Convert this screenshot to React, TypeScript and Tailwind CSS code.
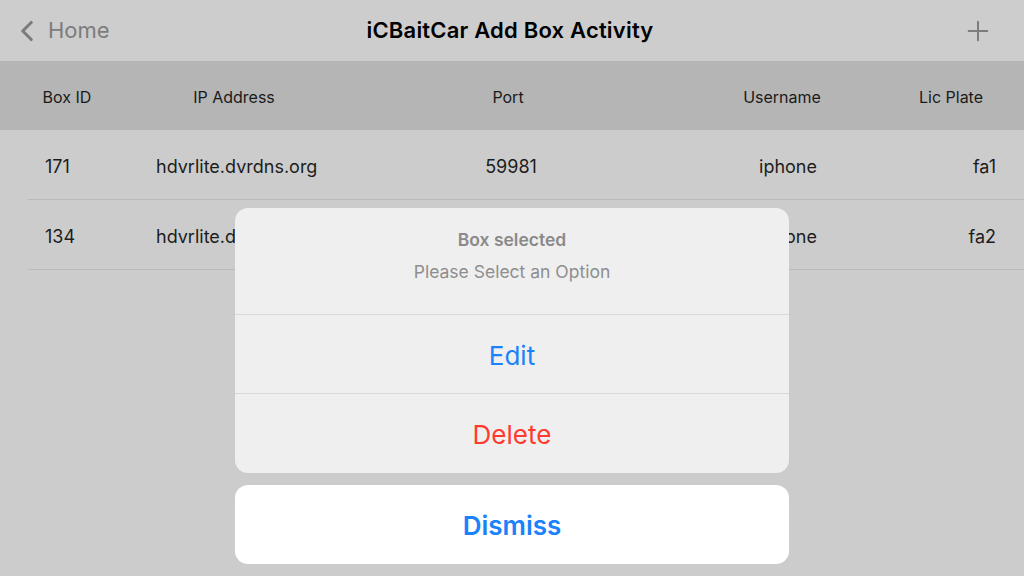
import { ChevronLeft, Plus } from "lucide-react"

const font = { fontFamily: 'Inter, "Noto Sans", "Liberation Sans", sans-serif' }

const rows = [
  { id: "171", ip: "hdvrlite.dvrdns.org", port: "59981", user: "iphone", plate: "fa1" },
  { id: "134", ip: "hdvrlite.dvrdns.org", port: "59981", user: "iphone", plate: "fa2" },
]

export default function App() {
  return (
    <main
      className="relative w-[1024px] h-[576px] overflow-hidden bg-[#cccccc] text-[#1c1c1c]"
      style={font}
    >
      {/* nav bar */}
      <header className="flex h-[61px] items-center bg-[#cdcdcd] pl-[10px] pr-[14px]">
        <div className="flex w-[300px] items-center text-[#7c7c7c]">
          <ChevronLeft className="h-[34px] w-[34px]" strokeWidth={2.2} />
          <span className="ml-[4px] text-[22px]">Home</span>
        </div>
        <h1 className="flex-1 text-center text-[22px] font-semibold tracking-[0.2px] text-black">
          iCBaitCar Add Box Activity
        </h1>
        <div className="flex w-[300px] justify-end pr-[16px] text-[#7c7c7c]">
          <Plus className="h-[32px] w-[32px]" strokeWidth={1.5} />
        </div>
      </header>

      {/* column header */}
      <div className="flex h-[69px] items-center bg-[#b5b5b5] pt-[3px] text-[16px] text-[#1a1a1a]">
        <div className="w-[134px] text-center">Box ID</div>
        <div className="w-[200px] text-center">IP Address</div>
        <div className="w-[348px] text-center">Port</div>
        <div className="w-[200px] text-center">Username</div>
        <div className="w-[138px] text-center">Lic Plate</div>
      </div>

      {/* rows */}
      <div className="pl-[28px]">
        {rows.map((r) => (
          <div key={r.id} className="flex h-[70px] items-center border-b border-[#b9b9b9] pt-[4px] text-[18px]">
            <div className="w-[128px] pl-[17px]">{r.id}</div>
            <div className="w-[300px]">{r.ip}</div>
            <div className="w-[110px] text-center">{r.port}</div>
            <div className="w-[134px]" />
            <div className="w-[176px] text-center">{r.user}</div>
            <div className="flex-1 pr-[28px] text-right">{r.plate}</div>
          </div>
        ))}
      </div>

      {/* action sheet */}
      <div className="absolute left-[235px] top-[208px] flex w-[554px] flex-col gap-[12px]">
        <div className="overflow-hidden rounded-[13px] bg-[#efefef]">
          <div className="flex h-[107px] flex-col items-center border-b border-[#d9d9d9] pt-[19px]">
            <div className="text-[17.5px] font-semibold text-[#8a8a8a]">Box selected</div>
            <div className="mt-[6px] text-[17.5px] text-[#8e8e8e]">Please Select an Option</div>
          </div>
          <button className="flex h-[79px] w-full items-center justify-center border-b border-[#d9d9d9] pt-[2px] text-[26px] text-[#1a82fb]">
            Edit
          </button>
          <button className="flex h-[79px] w-full items-center justify-center pt-[2px] text-[26px] text-[#ff3b30]">
            Delete
          </button>
        </div>
        <button className="flex h-[79px] w-full items-center justify-center rounded-[13px] bg-white pt-[2px] text-[26px] font-semibold text-[#1a82fb]">
          Dismiss
        </button>
      </div>
    </main>
  )
}
